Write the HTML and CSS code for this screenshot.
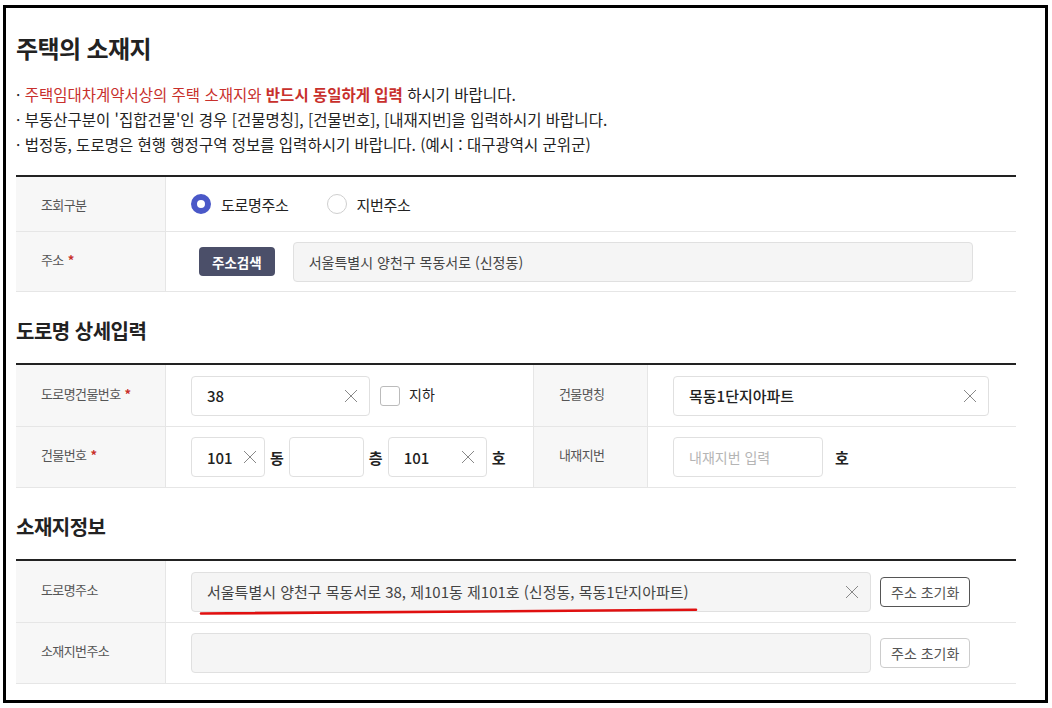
FILE: index.html
```html
<!DOCTYPE html>
<html lang="ko">
<head>
  <meta charset="UTF-8" />
  <title>주택의 소재지</title>
  <link rel="stylesheet" href="styles.css">
</head>
<body>

  <div class="frame">
    <div class="content">

      <!-- 주택의 소재지 -->
      <h1 class="page-title">주택의 소재지</h1>
      <ul class="notes">
        <li><span class="red">주택임대차계약서상의 주택 소재지와 </span> <b class="red">반드시 동일하게 입력</b> 하시기 바랍니다.</li>
        <li>부동산구분이 '집합건물'인 경우 [건물명칭], [건물번호], [내재지번]을 입력하시기 바랍니다.</li>
        <li>법정동, 도로명은 현행 행정구역 정보를 입력하시기 바랍니다. (예시 : 대구광역시 군위군)</li>
      </ul>

      <div class="form-table two-col">
        <div class="row first">
          <div class="label">조회구분</div>
          <div class="field">
            <label class="radio checked"><span class="dot"></span>도로명주소</label>
            <label class="radio"><span class="dot"></span>지번주소</label>
          </div>
        </div>
        <div class="row">
          <div class="label">주소 <i class="req">*</i></div>
          <div class="field">
            <button class="btn-dark">주소검색</button>
            <div class="input readonly wide">서울특별시 양천구 목동서로 (신정동)</div>
          </div>
        </div>
      </div>

      <!-- 도로명 상세입력 -->
      <h2 class="sub-title">도로명 상세입력</h2>
      <div class="form-table four-col">
        <div class="row">
          <div class="label">도로명건물번호 <i class="req">*</i></div>
          <div class="field">
            <div class="input value w-178"><span>38</span><span class="clear"></span></div>
            <label class="check"><span class="box"></span>지하</label>
          </div>
          <div class="label">건물명칭</div>
          <div class="field">
            <div class="input value w-316"><span>목동1단지아파트</span><span class="clear"></span></div>
          </div>
        </div>
        <div class="row">
          <div class="label">건물번호 <i class="req">*</i></div>
          <div class="field">
            <div class="input value w-73"><span>101</span><span class="clear"></span></div>
            <span class="unit">동</span>
            <div class="input w-75"></div>
            <span class="unit">층</span>
            <div class="input value w-99"><span>101</span><span class="clear"></span></div>
            <span class="unit">호</span>
          </div>
          <div class="label">내재지번</div>
          <div class="field">
            <div class="input w-150 placeholder">내재지번 입력</div>
            <span class="unit wide-gap">호</span>
          </div>
        </div>
      </div>

      <!-- 소재지정보 -->
      <h2 class="sub-title">소재지정보</h2>
      <div class="form-table two-col">
        <div class="row">
          <div class="label">도로명주소</div>
          <div class="field">
            <div class="input readonly w-680 marked">
              <span>서울특별시 양천구 목동서로 38, 제101동 제101호 (신정동, 목동1단지아파트)</span>
              <span class="clear"></span>
              <svg class="underline" width="500" height="8" viewBox="0 0 500 8">
                <path d="M2 5.5 C120 4.5 300 3.5 497 1.8" fill="none" stroke="#e01010" stroke-width="2.6" stroke-linecap="round"/>
              </svg>
            </div>
            <button class="btn-line">주소 초기화</button>
          </div>
        </div>
        <div class="row">
          <div class="label">소재지번주소</div>
          <div class="field">
            <div class="input readonly w-680"></div>
            <button class="btn-line light">주소 초기화</button>
          </div>
        </div>
      </div>

    </div>
  </div>

</body>
</html>
```

FILE: styles.css
```css
body {
  margin: 0;
  font-family: "Noto Sans CJK KR", "Noto Sans", sans-serif;
  color: #222;
  background: #fff;
}

.frame {
  box-sizing: border-box;
  width: 1045px;
  height: 698px;
  margin: 5px 0 0 3px;
  border: 3px solid #000;
}

.content {
  width: 1000px;
  margin-left: 10px;
}

.page-title {
  margin: 25px 0 0;
  font-size: 24px;
  line-height: 30px;
  font-weight: 700;
  letter-spacing: -0.6px;
}

.notes {
  list-style: none;
  margin: 19px 0 0;
  padding: 0;
  font-size: 15.5px;
  line-height: 25px;
}

.notes li::before {
  content: "· ";
}

.red {
  color: #c8302c;
}

.sub-title {
  margin: 26px 0 0;
  font-size: 20px;
  line-height: 26px;
  font-weight: 700;
  letter-spacing: -0.5px;
}

.form-table {
  margin-top: 19px;
  border-top: 2px solid #222;
}

.page-title + .notes + .form-table {
  margin-top: 18px;
}

.row {
  display: grid;
  height: 61px;
  border-bottom: 1px solid #e6e6e6;
}

.row + .row {
  height: 60px;
}

.row.first {
  height: 54px;
}

.row.first + .row {
  height: 59px;
}

.two-col .row {
  grid-template-columns: 150px 1fr;
}

.four-col .row {
  grid-template-columns: 150px 367px 115px 1fr;
}

.label {
  display: flex;
  align-items: center;
  padding: 0 0 5px 25px;
  background: #f7f7f7;
  border-right: 1px solid #e6e6e6;
  font-size: 13px;
  color: #555;
  letter-spacing: -0.6px;
}

.row.first .label {
  padding-bottom: 0;
}

.field + .label {
  border-left: 1px solid #e6e6e6;
}

.req {
  font-style: normal;
  color: #c8302c;
  font-weight: 700;
  margin-left: 4px;
}

.field {
  display: flex;
  align-items: center;
  padding-left: 25px;
}

/* radios */
.radio {
  display: flex;
  align-items: center;
  font-size: 15px;
  margin-right: 38px;
  letter-spacing: -0.3px;
}

.radio .dot {
  box-sizing: border-box;
  width: 20px;
  height: 20px;
  border-radius: 50%;
  border: 1px solid #cfcfcf;
  background: #fff;
  margin-right: 10px;
}

.radio.checked .dot {
  border: 6px solid #4a58c8;
}

/* inputs */
.input {
  box-sizing: border-box;
  position: relative;
  display: flex;
  align-items: center;
  justify-content: space-between;
  height: 40px;
  padding: 0 12px 0 15px;
  border: 1px solid #e0e0e0;
  border-radius: 4px;
  background: #fff;
  font-size: 14px;
}

.input.value {
  font-size: 15px;
  font-weight: 500;
}

.input.readonly {
  background: #f5f5f5;
  color: #444;
}

.input.marked {
  font-size: 15px;
}

.input.placeholder {
  color: #b5b5b5;
}

.wide { width: 680px; margin-left: 18px; }
.w-178 { width: 179px; }
.w-316 { width: 316px; }
.w-73 { width: 74px; padding-right: 8px; }
.w-75 { width: 75px; }
.w-99 { width: 99px; }
.w-150 { width: 150px; }
.w-680 { width: 680px; }

.clear {
  flex: none;
  width: 12px;
  height: 12px;
  background:
    linear-gradient(45deg, transparent 46.5%, #888 46.5%, #888 53.5%, transparent 53.5%),
    linear-gradient(-45deg, transparent 46.5%, #888 46.5%, #888 53.5%, transparent 53.5%);
}

.unit {
  font-size: 15px;
  font-weight: 700;
  margin: 0 5px;
}

.unit.wide-gap {
  margin-left: 12px;
}

.check {
  display: flex;
  align-items: center;
  font-size: 14px;
  margin-left: 10px;
  margin-top: -4px;
}

.check .box {
  box-sizing: border-box;
  width: 20px;
  height: 20px;
  border: 1px solid #bbb;
  border-radius: 3px;
  margin-right: 9px;
  margin-top: 4px;
}

.btn-dark {
  margin-left: 8px;
  height: 29px;
  padding: 0 13px;
  border: 0;
  border-radius: 4px;
  background: #4b4f69;
  color: #fff;
  font-family: inherit;
  font-size: 13.5px;
  font-weight: 700;
}

.btn-line {
  margin-left: 9px;
  height: 30px;
  padding: 0 10px;
  border: 1px solid #555;
  border-radius: 4px;
  background: #fff;
  color: #555;
  font-family: inherit;
  font-size: 14px;
}

.btn-line.light {
  border-color: #ccc;
}

.underline {
  position: absolute;
  left: 7px;
  top: 35px;
}
```
